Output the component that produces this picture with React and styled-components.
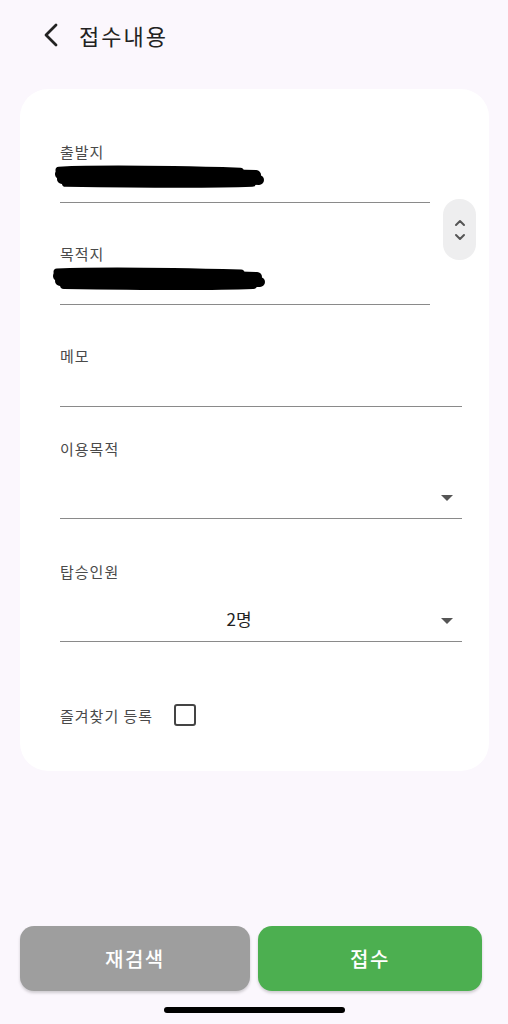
import React from "react";
import styled, { createGlobalStyle } from "styled-components";

const GlobalStyle = createGlobalStyle`
  html, body {
    margin: 0;
    padding: 0;
    background: #fbf7fd;
  }
  body {
    font-family: "Noto Sans CJK KR", "Noto Sans", sans-serif;
  }
`;

const Page = styled.div`
  width: 508px;
  height: 1024px;
  display: flex;
  flex-direction: column;
  background: #fbf7fd;
  overflow: hidden;
`;

const Header = styled.div`
  height: 70px;
  display: flex;
  align-items: center;
  padding-left: 40px;
  gap: 17px;
`;

const BackButton = styled.button`
  border: 0;
  background: none;
  padding: 0;
  width: 22px;
  height: 24px;
  display: flex;
  align-items: center;
  justify-content: center;
`;

const Title = styled.h1`
  margin: 0;
  font-size: 22px;
  font-weight: 400;
  letter-spacing: 2px;
  color: #222;
  line-height: 28px;
`;

const Card = styled.div`
  position: relative;
  margin: 19px 19px 0 20px;
  background: #fff;
  border-radius: 28px;
  padding: 53px 27px 45px 40px;
  display: flex;
  flex-direction: column;
`;

const Field = styled.div`
  margin-top: ${(p) => p.$mt || 0}px;
  margin-right: ${(p) => p.$mr || 0}px;
  border-bottom: 1px solid #8a8a8a;
  display: flex;
  flex-direction: column;
`;

const Label = styled.div`
  font-size: 15px;
  line-height: 20px;
  letter-spacing: 1px;
  color: #4a4a4a;
`;

const InputArea = styled.div`
  height: 40px;
  display: flex;
  align-items: flex-start;
  padding-top: 3px;
  box-sizing: border-box;
`;

const Scribble = styled.svg`
  margin-left: ${(p) => p.$ml || 0}px;
  display: block;
`;

const SelectRow = styled.div`
  margin-top: 19px;
  height: 40px;
  display: flex;
  align-items: center;
  padding-right: 9px;
`;

const SelectValue = styled.div`
  flex: 1;
  text-align: center;
  font-size: 17px;
  line-height: 22px;
  margin-top: -4px;
  color: #222;
  padding-right: 23px;
`;

const Caret = styled.div`
  width: 0;
  height: 0;
  border-left: 6px solid transparent;
  border-right: 6px solid transparent;
  border-top: 6px solid #555;
`;

const ScrollHandle = styled.div`
  position: absolute;
  left: 423px;
  top: 110px;
  width: 33px;
  height: 61px;
  border-radius: 16px;
  background: #eeeeef;
  display: flex;
  align-items: center;
  justify-content: center;
`;

const CheckRow = styled.label`
  margin-top: 62px;
  display: flex;
  align-items: center;
  gap: 21px;
  font-size: 15px;
  letter-spacing: 1px;
  color: #4a4a4a;
`;

const CheckBox = styled.span`
  width: 18px;
  height: 18px;
  border: 2.5px solid #444;
  border-radius: 3px;
  display: inline-block;
`;

const Spacer = styled.div`
  flex: 1;
`;

const ButtonBar = styled.div`
  display: flex;
  gap: 8px;
  padding: 0 26px 0 20px;
`;

const ActionButton = styled.button`
  flex: ${(p) => p.$flex};
  height: 65px;
  border: 0;
  border-radius: 14px;
  background: ${(p) => p.$bg};
  color: #fff;
  font-family: inherit;
  font-size: 20px;
  font-weight: 500;
  letter-spacing: 1.5px;
  box-shadow: 0 2px 3px rgba(0, 0, 0, 0.18);
`;

const HomeIndicator = styled.div`
  width: 181px;
  height: 6px;
  border-radius: 3px;
  background: #000;
  margin: 16px auto 11px 164px;
`;

function RedactMark({ width, ml }) {
  return (
    <Scribble $ml={ml} width={width} height="24" viewBox="0 0 215 24">
      <g fill="none" stroke="#000" strokeLinecap="round">
        <path d="M6 5 C 50 3, 120 4, 190 6" strokeWidth="7" />
        <path d="M7 9 C 70 7, 150 8, 206 10" strokeWidth="10" />
        <path d="M9 14 C 80 13, 150 14, 209 15" strokeWidth="10" />
        <path d="M13 18 C 80 19, 150 20, 202 18" strokeWidth="8" />
      </g>
    </Scribble>
  );
}

export default function App() {
  return (
    <Page>
      <GlobalStyle />
      <Header>
        <BackButton>
          <svg width="16" height="24" viewBox="0 0 16 24">
            <path
              d="M13 2 L3 12 L13 22"
              fill="none"
              stroke="#222"
              strokeWidth="2.8"
              strokeLinecap="round"
              strokeLinejoin="round"
            />
          </svg>
        </BackButton>
        <Title>접수내용</Title>
      </Header>

      <Card>
        <Field $mr={32}>
          <Label>출발지</Label>
          <InputArea>
            <RedactMark width={212} ml={-7} />
          </InputArea>
        </Field>
        <Field $mr={32} $mt={41}>
          <Label>목적지</Label>
          <InputArea>
            <RedactMark width={217} ml={-10} />
          </InputArea>
        </Field>
        <Field $mt={41}>
          <Label>메모</Label>
          <InputArea />
        </Field>
        <Field $mt={32}>
          <Label>이용목적</Label>
          <SelectRow>
            <SelectValue />
            <Caret />
          </SelectRow>
        </Field>
        <Field $mt={43}>
          <Label>탑승인원</Label>
          <SelectRow>
            <SelectValue>2명</SelectValue>
            <Caret />
          </SelectRow>
        </Field>
        <CheckRow>
          즐겨찾기 등록
          <CheckBox />
        </CheckRow>

        <ScrollHandle>
          <svg width="14" height="26" viewBox="0 0 14 26">
            <g fill="none" stroke="#555" strokeWidth="2" strokeLinecap="round" strokeLinejoin="round">
              <path d="M3 8 L7 4 L11 8" />
              <path d="M3 18 L7 22 L11 18" />
            </g>
          </svg>
        </ScrollHandle>
      </Card>

      <Spacer />

      <ButtonBar>
        <ActionButton $flex="230" $bg="#9e9e9e">재검색</ActionButton>
        <ActionButton $flex="224" $bg="#4caf50">접수</ActionButton>
      </ButtonBar>
      <HomeIndicator />
    </Page>
  );
}
